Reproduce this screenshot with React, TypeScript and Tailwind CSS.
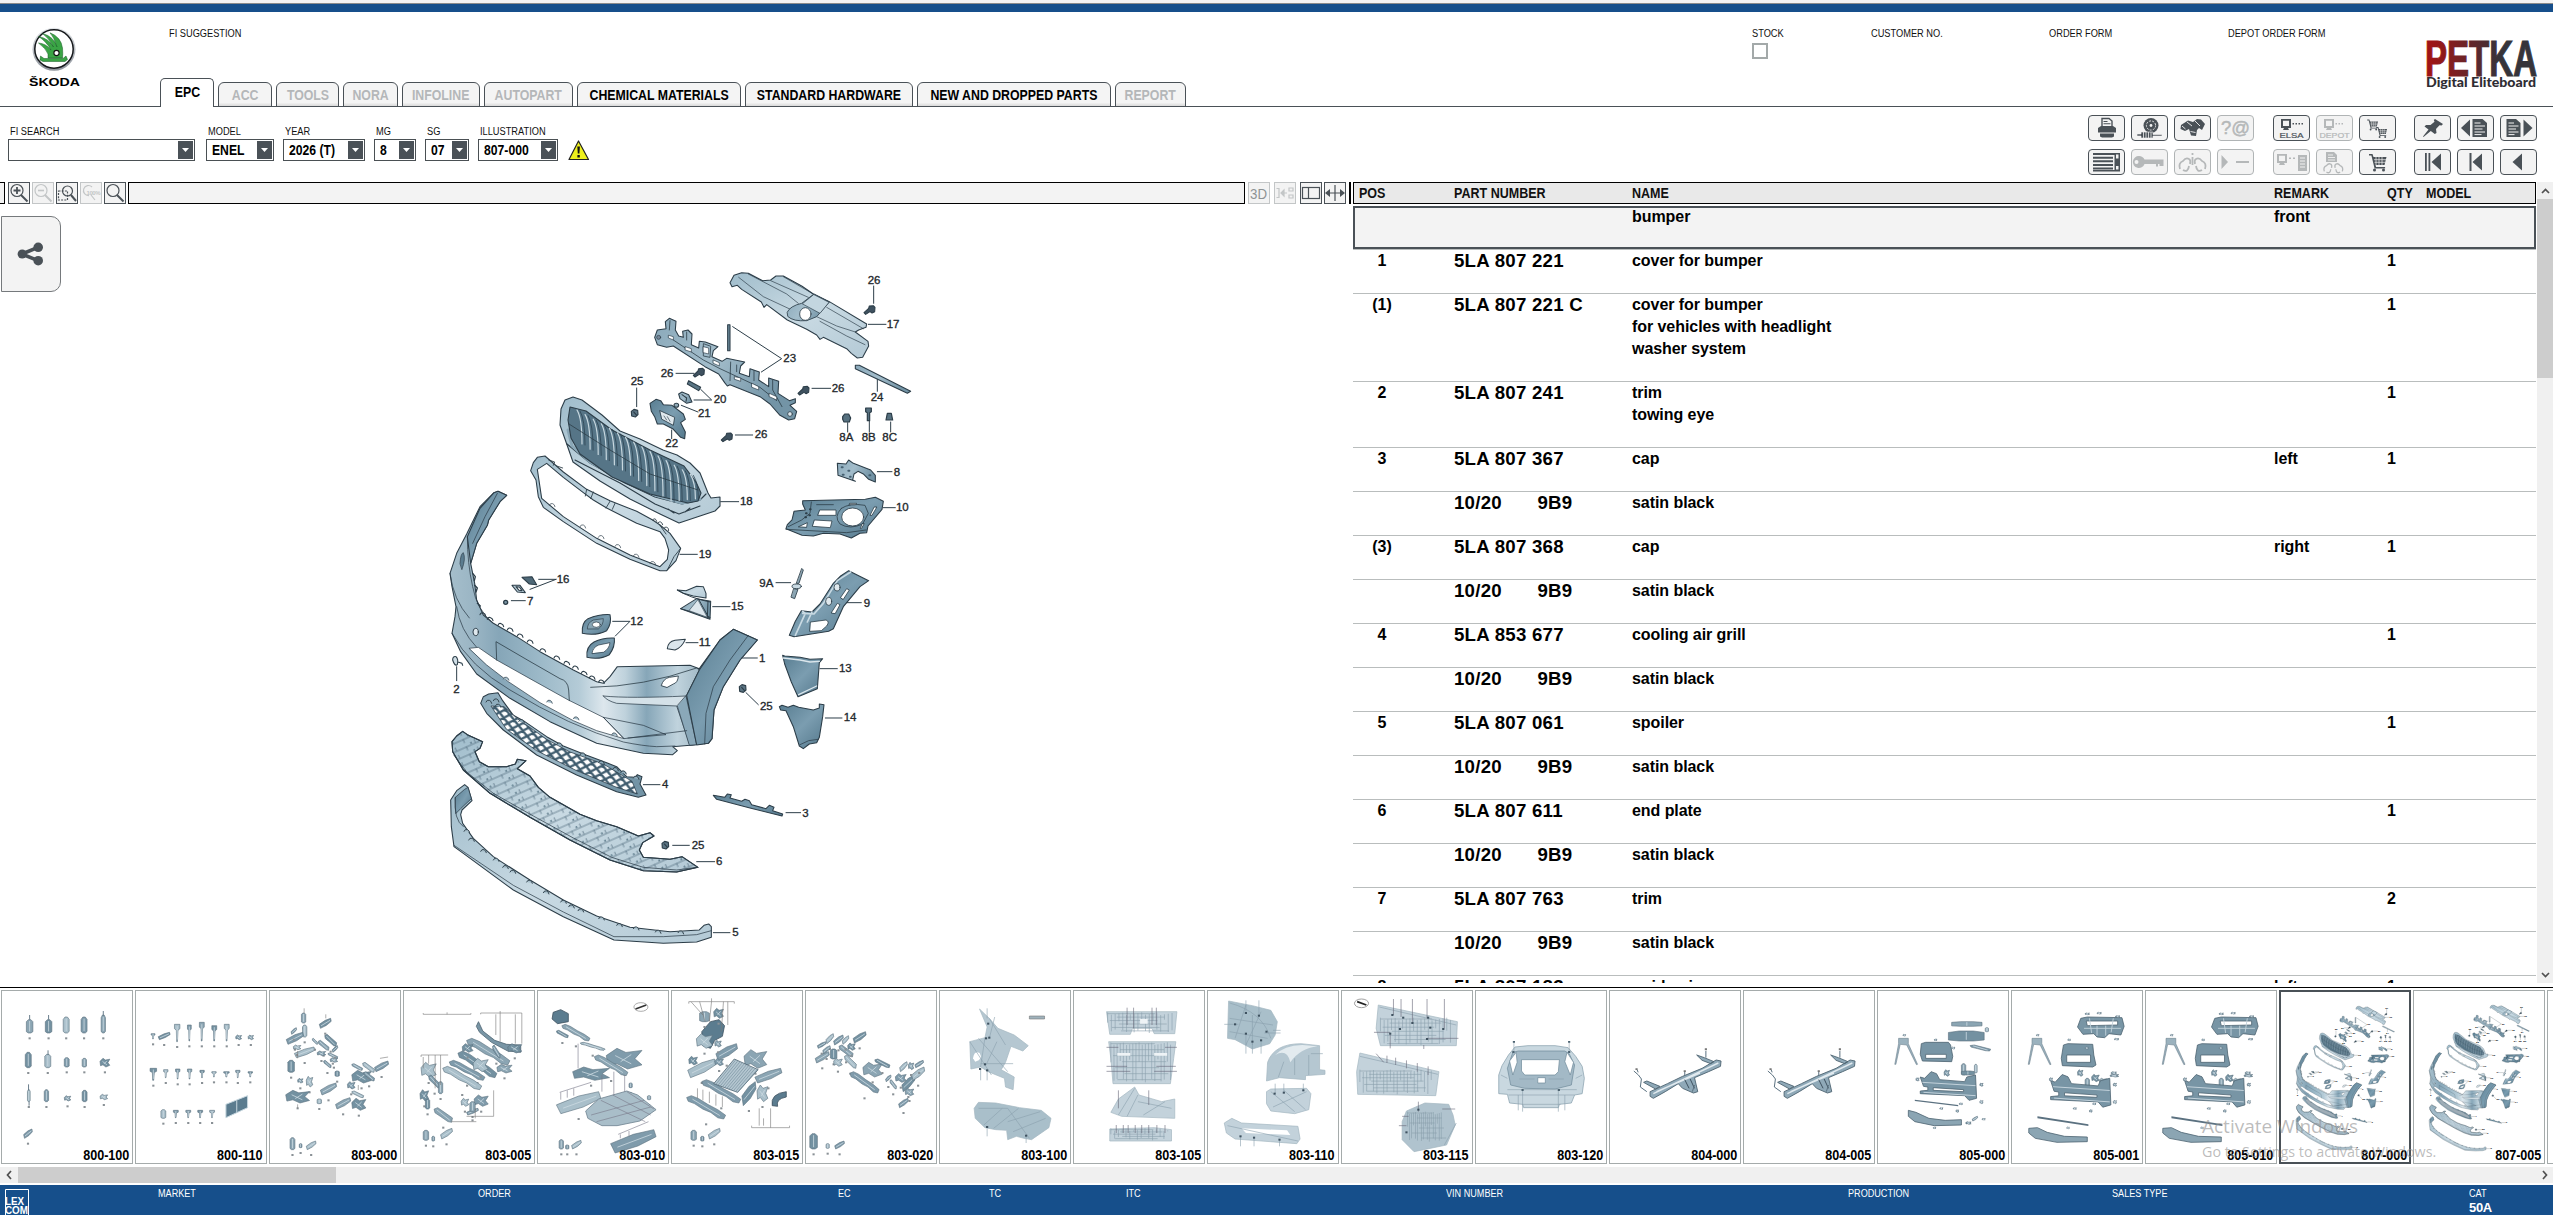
import React from "react";

const INK = "#2c3d48";

/* ---------- main exploded drawing ---------- */

type Lbl = [number, number, string];

const Labels = ({ items }: { items: Lbl[] }) => (
  <g fill="#23282c" stroke="#23282c" strokeWidth="1" fontSize="34.5" fontFamily="'Liberation Sans', Arial, sans-serif">
    {items.map(([x, y, t], i) => (
      <text key={i} x={x} y={y}>{t}</text>
    ))}
  </g>
);

const Screw = ({ x, y }: { x: number; y: number }) => (
  <path transform={`translate(${x} ${y})`} d="M-18 8 L-4 -5 L-2 -12 L10 -13 L15 -8 L14 5 L6 9 L0 5 L-13 13 Z" fill="#3f5260" />
);

const Clip = ({ x, y }: { x: number; y: number }) => (
  <path transform={`translate(${x} ${y})`} d="M-10 -6 L-2 -12 L9 -9 L10 4 L2 11 L-9 8 Z M-3 -4 L5 5" fill="#5b7483" strokeWidth="3.4" />
);

function Drawing({ id }: { id: string }) {
  const u = (n: string) => `url(#${id}${n})`;
  const slats = Array.from({ length: 15 }, (_, i) => {
    const x = 577 + i * 8.1;
    const t = 410 + i * 4.6;
    const b = 444 + i * 5.2 - (i > 11 ? (i - 11) * 6 : 0);
    return `M${x} ${t} Q${x + 5} ${t + 8} ${x + 5} ${b}`;
  }).join(" ");
  const bumps = (pts: number[][]) => pts.map(([x, y]) => `M${x} ${y + 2} q3 -8 10 -5 q6 2 7 9`).join(" ");
  return (
    <g stroke={INK} strokeLinejoin="round" strokeLinecap="round">
      <defs>
        <linearGradient id={id + "l"} x1="0" y1="0" x2="1" y2="1">
          <stop offset="0" stopColor="#9fbccb" />
          <stop offset="0.5" stopColor="#c9dae3" />
          <stop offset="1" stopColor="#b4cad6" />
        </linearGradient>
        <linearGradient id={id + "m"} x1="0" y1="0" x2="1" y2="0.4">
          <stop offset="0" stopColor="#8aa9ba" />
          <stop offset="0.5" stopColor="#a3bdcb" />
          <stop offset="1" stopColor="#7394a6" />
        </linearGradient>
        <linearGradient id={id + "d"} x1="0" y1="0" x2="1" y2="1">
          <stop offset="0" stopColor="#587d91" />
          <stop offset="0.5" stopColor="#7b9db0" />
          <stop offset="1" stopColor="#54788c" />
        </linearGradient>
        <linearGradient id={id + "b"} x1="0" y1="0" x2="1" y2="0">
          <stop offset="0" stopColor="#a5becb" />
          <stop offset="0.08" stopColor="#9ab5c4" />
          <stop offset="0.16" stopColor="#86a6b8" />
          <stop offset="0.3" stopColor="#9dbac9" />
          <stop offset="0.42" stopColor="#b4cbd7" />
          <stop offset="0.5" stopColor="#dde7ed" />
          <stop offset="0.57" stopColor="#bfd2dc" />
          <stop offset="0.64" stopColor="#86a6b8" />
          <stop offset="0.74" stopColor="#c0d3dd" />
          <stop offset="1" stopColor="#54788c" />
        </linearGradient>
        <pattern id={id + "x"} width="32" height="26" patternUnits="userSpaceOnUse" patternTransform="rotate(12)">
          <rect width="32" height="26" fill="#fff" stroke="none" />
          <path d="M0 0 L32 26 M32 0 L0 26" stroke="#3f5c6e" strokeWidth="7" />
        </pattern>
        <pattern id={id + "h"} width="62" height="24" patternUnits="userSpaceOnUse" patternTransform="rotate(-24)">
          <path d="M0 12 H62 M18 12 V22 M48 0 V10" stroke="#4a6678" strokeWidth="2" fill="none" />
          <circle cx="36" cy="6" r="3" fill="#5d7a8a" stroke="none" />
        </pattern>
      </defs>

      {/* radiator grille and frame */}
      <g strokeWidth="1.1">
        <path d="M561 409 L565 400 L573 397 L582 400 L602 415 L620 431 L640 439 L663 450 L677 455 L690 463 L700 473 L708 493 L711 498 L720 497 L720 506 L715 511 L700 516 L679 523 L660 514 L630 499 L600 481 L573 462 L566 442 L560 425 Z" fill={u("l")} />
        <path d="M567 444 L590 463 L625 483 L655 497 L682 504 L700 500 L706 494 M575 460 L620 483 L655 504 L679 514 L700 506 M668 509 l6 4 M685 512 l5 -4" fill="none" />
        <path d="M568 430 L572 446 L590 462 L625 481 L655 495 L682 503 L700 499" fill="none" stroke="#8aa7b7" strokeWidth="3" />
        <path d="M570 407 L586 411 L612 430 L650 450 L684 466 L696 482 L701 493 L698 501 L688 503 L650 494 L612 477 L580 454 L571 438 L568 420Z" fill="#567587" />
        <path d={slats} stroke="#c8d8e0" strokeWidth="1.2" fill="none" />
        <path d={slats} transform="translate(3 1)" stroke="#2c4352" strokeWidth="0.8" fill="none" />
        <path d="M569 424 L610 450 L650 474 L698 490" fill="none" strokeWidth="0.8" />
      </g>

      {/* upper parts */}
      <g transform="translate(620 250) scale(.33333)" strokeWidth="3.2">
        <path d="M330 98 L342 76 L365 68 L385 70 L428 92 L452 90 L468 78 L490 78 L545 108 L580 132 L628 155 L740 222 L738 232 L716 240 L706 246 L744 274 L746 288 L728 322 L712 324 L694 310 L680 296 L610 262 L600 268 L590 255 L560 238 L502 210 L440 164 L432 172 L424 156 L365 118 L352 106 L336 110 Z" fill={u("l")} />
        <path d="M385 72 L500 132 L535 160 M452 92 L565 142 M490 80 L580 132 M620 172 L730 236 M356 82 L430 140 L520 182 M600 214 L680 258 L735 284 M590 200 L650 228 L706 246" fill="none" strokeWidth="2" />
        <path d="M502 186 Q510 168 545 160 L582 132 L628 156 L590 200 L560 212 Q520 215 504 200 Z" fill={u("m")} strokeWidth="2.5" />
        <path d="M582 134 L627 157 L600 190 L548 162Z" fill="#c3d6e0" strokeWidth="2" />
        <ellipse cx="556" cy="192" rx="17" ry="19" fill="#fff" strokeWidth="2.5" />
        <path d="M104 262 L112 240 L138 236 L136 215 L148 205 L168 214 L166 240 L176 258 L190 262 L188 244 L204 240 L216 252 L214 284 L236 294 L238 274 L256 276 L294 290 L280 302 L276 320 L306 334 L320 325 L374 336 L362 348 L358 370 L388 380 L390 356 L418 366 L416 390 L446 410 L446 384 L476 394 L474 430 L508 452 L526 446 L526 458 L510 466 L530 484 L524 506 L506 510 L480 496 L450 462 L420 440 L330 404 L322 408 L314 398 L296 372 L255 350 L160 288 L140 292 L112 284 Z" fill={u("m")} />
        <path d="M160 270 L250 330 L300 356 L420 412 L470 452 M150 212 L148 240 M200 246 L200 270 M250 282 L250 318 L270 322 L272 290Z M332 336 L330 392 M350 345 L350 365 M402 362 L402 392 M458 390 L458 420 L486 470" fill="none" strokeWidth="2.4" />
        <path d="M146 256 l14 4 v10 l-14 -6Z M196 290 l18 6 v10 l-18 -6Z M250 290 l16 4 v18 l-16 -4Z M280 330 l18 8 v10 l-18 -8Z M344 380 l18 4 v10 l-18 -6Z M396 400 l20 10 v10 l-20 -8Z M448 430 l22 10 v10 l-22 -10Z" fill="#fff" strokeWidth="2" />
        <circle cx="116" cy="262" r="6" fill="#789" strokeWidth="2" />
        <circle cx="510" cy="492" r="7" fill="#dfe8ed" strokeWidth="2.4" />
        <path d="M323 224 h7 v78 h-7Z" fill="#6d8a9b" />
        <path d="M206 392 L242 412 L236 422 L202 402Z" fill="#5a7585" />
        <path d="M176 432 L186 426 L206 434 L216 456 L200 460 L180 446Z M186 434 L200 444 L198 454" fill={u("m")} />
        <ellipse cx="169" cy="466" rx="7" ry="6" fill="#8fa9b7" />
        <path d="M90 460 L108 448 L122 452 L130 464 L156 466 L190 492 L196 508 L182 518 L196 546 L194 566 L182 562 L158 536 L130 522 L112 522 L104 500 L94 484 Z" fill={u("d")} />
        <path d="M120 482 L164 502 L160 526 L126 508Z" fill="#dfe8ed" strokeWidth="2.5" />
        <path d="M132 498 l8 12 M142 500 l8 14" strokeWidth="2" />
        <path d="M706 346 L718 346 L872 424 L862 430 L706 356Z" fill={u("m")} />
        <Screw x={750} y={180} /><Screw x={238} y={368} /><Screw x={552} y={422} /><Screw x={322} y={562} />
        <Clip x={44} y={490} />
        <path d="M668 500 L674 492 L686 492 L692 504 L688 516 L672 516 L668 508Z M737 474 h17 v11 l-5 3 v24 h-7 v-24 l-5 -3Z M802 490 h12 l4 20 h-20Z" fill="#56707f" strokeWidth="3.6" />
        <path d="M652 640 L678 642 L686 630 L700 640 L752 660 L766 676 L766 696 L746 688 L730 672 L714 664 L702 672 L698 690 L706 694 L654 676 Z" fill={u("m")} />
        <path d="M665 652 h3 M685 662 h3 M668 674 h3 M690 680 h2 M748 676 h3" strokeWidth="6" stroke="#456071" />
        <path d="M548 752 L736 748 L766 742 L790 754 L786 778 L744 828 L740 848 L720 850 L694 864 L660 852 L610 850 L580 858 L546 856 L498 836 L502 824 L516 810 L522 784 L556 780 L548 762Z" fill={u("d")} />
        <path d="M574 756 L570 790 L545 810 L505 830 M498 838 L680 848 L738 840 M590 764 H640 M664 775 Q640 800 660 822 Q690 840 728 822 L745 790 L735 766 Q690 758 664 775" fill="none" strokeWidth="2.4" />
        <path d="M600 780 h48 v16 h-54Z M584 810 l52 3 l-5 20 l-53 -4Z M536 830 L562 818 L560 831Z M770 772 l-14 24 h-6 l12 -24Z M732 822 l-8 14 h-3 l5 -14Z M690 760 h20 l-4 4 h-18Z" fill="#fff" strokeWidth="2.4" />
        <ellipse cx="698" cy="801" rx="33" ry="27" fill="#fff" strokeWidth="2.5" />
        <path d="M558 790 h2 M570 778 h2 M556 802 h2 M568 796 h2" strokeWidth="6" />
        <path d="M745 223 H798 M761 108 V160 M338 230 L485 326 L424 366 M168 370 H222 M576 415 H632 M346 555 H398 M50 414 V470 M242 418 L275 450 H222 M184 466 L234 486 M155 540 V566 M772 388 V424 M683 518 V546 M748 512 V546 M812 516 V546 M772 665 H816 M790 773 H826 M302 755 H356" fill="none" strokeWidth="3" />
        <Labels items={[[743,101,"26"],[800,233,"17"],[490,337,"23"],[122,382,"26"],[635,427,"26"],[404,565,"26"],[32,406,"25"],[281,460,"20"],[234,500,"21"],[136,591,"22"],[752,453,"24"],[658,573,"8A"],[725,573,"8B"],[787,573,"8C"],[821,677,"8"],[828,784,"10"],[360,765,"18"]]} />
      </g>

      {/* bumper cover and neighbours */}
      <g transform="translate(430 460) scale(.33333)" strokeWidth="3.2">
        <path fillRule="evenodd" d="M302 32 L310 8 L322 -8 L345 -12 L400 36 L470 88 L540 122 L620 154 L668 180 L690 195 L720 220 L752 265 L738 302 L710 332 L690 332 L600 298 L500 250 L400 185 L340 142 L325 110 L318 60Z M322 28 L350 10 L400 52 L460 98 L490 120 L530 144 L620 190 L690 215 L705 235 L716 270 L712 298 L690 320 L600 285 L500 235 L400 170 L335 115Z" fill={u("l")} />
        <path d="M470 88 l-4 20 M490 96 l-8 20 M540 124 l-12 20 M555 130 l-8 18 M690 196 L708 222 M752 265 L732 290 L712 330 M356 0 l18 6 l-4 10 M380 18 l18 6 M668 180 q8 -10 12 4 M684 188 q10 -8 14 6 M704 202 q12 -4 12 10" fill="none" strokeWidth="2.6" />
        <path d={bumps([[358,134],[450,198],[505,230],[555,257],[610,286],[660,308]])} fill="none" strokeWidth="2" />

        <path d="M192 98 L204 94 L230 106 L210 125 L176 180 L172 196 L140 250 L122 310 L134 370 L140 420 L160 465 L190 490 L260 530 L330 575 L430 630 L500 665 L520 670 L540 650 L562 620 L780 616 L808 626 L870 540 L910 508 L982 540 L930 600 L880 680 L852 750 L846 836 L835 850 L780 856 L728 860 L742 872 L728 884 L640 880 L500 850 L360 785 L240 715 L140 642 L92 575 L66 520 L75 470 L78 440 L66 380 L60 340 L80 280 L110 222 L150 140 Z" fill={u("b")} />
        <path d="M192 98 L204 94 L230 106 L210 125 L176 180 L172 196 L140 250 L122 310 L112 230 L150 145 Z" fill={u("d")} />
        <path d="M202 100 L165 170 L128 250 M112 230 Q112 310 128 380 Q140 450 190 490 M60 340 Q70 420 118 474 M80 440 Q90 510 140 562 M66 520 Q120 620 240 690 Q420 800 580 846 Q640 858 680 860 L735 858" fill="none" strokeWidth="2.2" />
        <path d="M90 310 q2 -30 10 -32 q8 18 -4 50Z" fill="#5b7c8f" strokeWidth="2" />
        <ellipse cx="137" cy="516" rx="8" ry="11" fill="#dfe8ed" strokeWidth="3" />
        <path d="M118 565 L145 562 L200 600 L300 656 L415 720 L520 772 L582 836 L500 812 L430 782 L330 728 L235 665 L170 615Z" fill="#fff" strokeWidth="2.2" />
        <path d={bumps([[220,655],[350,724],[430,774],[545,822]])} fill="#a9c0cc" strokeWidth="2" />
        <path d="M200 600 L198 545 Q300 605 390 656 Q414 662 416 690 L418 722" fill="none" strokeWidth="2.4" />
        <path d={bumps([[150,462],[172,476],[204,494],[232,508],[262,526],[292,544],[330,570],[372,592],[402,608],[428,622],[454,638],[478,652],[506,664]])} fill="none" strokeWidth="3.2" />
        <path d="M128 340 l8 10 l-3 12 M134 376 l8 8 l-4 12 M142 430 l9 8" fill="none" strokeWidth="4" />
        <path d="M482 682 Q640 680 800 624 L808 630 L770 706" fill="none" strokeWidth="2.4" />
        <path d="M520 708 Q600 716 768 708 L784 770 L798 854 L780 856 L740 738 L560 730 Q530 722 520 708Z" fill="#d4e1e8" strokeWidth="2.2" />
        <path d="M768 708 L800 854 L778 856 L742 738Z" fill="#8aa8b9" strokeWidth="2.2" />
        <path d="M770 706 L808 630 L870 540 L910 508 L982 540 L930 600 L880 680 L852 750 L846 836 L835 850 L800 855 Z" fill={u("d")} />
        <path d="M955 526 L900 600 L850 680 L828 760 L824 852" fill="none" strokeWidth="2.2" />
        <path d="M520 772 L582 836 L770 812 M520 772 L640 796 L708 824 L594 834" fill="none" strokeWidth="2.2" />
        <path d="M694 676 Q700 656 718 652 L745 648 Q744 668 730 672 L712 682Z" fill="#fff" strokeWidth="2.6" />

        <path d="M68 600 q0 -12 10 -10 q8 8 4 24 q-8 6 -14 -14Z M84 606 l12 4 l2 6" fill="#cfdde5" />
        <path d="M276 352 L306 350 L320 374 L298 372Z" fill="#4f6978" />
        <path d="M246 376 L270 376 L286 398 L262 396Z M258 380 L268 381 L276 392 L267 391Z" fill="#b5c9d4" fillRule="evenodd" />
        <circle cx="227" cy="427" r="6" fill="#7d97a6" strokeWidth="4" />
        <path d="M457 520 Q454 488 474 476 Q510 462 540 464 Q546 490 530 512 Q500 528 457 520Z" fill={u("d")} />
        <path d="M472 506 Q472 488 490 480 L520 476 Q520 496 506 506Z" fill="#86a3b3" strokeWidth="2" />
        <ellipse cx="499" cy="494" rx="12" ry="8" fill="#fff" strokeWidth="2.2" />
        <path d="M471 592 Q467 560 492 546 Q520 532 553 534 Q556 560 538 584 Q510 600 471 592Z" fill={u("d")} />
        <path d="M486 580 Q488 562 506 555 L540 548 Q538 566 522 576Z" fill="#fff" strokeWidth="2.2" />
        <path d="M712 566 Q714 545 735 541 L766 538 Q756 562 735 570Z" fill="#dbe6ec" />
        <path d="M752 446 L800 416 L842 424 L840 478 Z" fill={u("m")} />
        <path d="M742 390 L768 392 L800 379 L820 380 L828 400 L828 414 L790 408 L760 400 Z" fill={u("l")} />
        <path d="M742 390 Q780 414 840 426 M806 418 L838 476 M834 424 L832 474 M752 446 L840 472" fill="none" strokeWidth="3" />
        <path d="M804 420 L832 472 L778 452Z" fill="#dde7ed" strokeWidth="1.6" />
        <Clip x={938} y={686} />
        <path d="M80 620 V662 M326 358 H378 M300 388 L378 358 M244 422 H286 M548 484 H600 L556 528 M768 548 H804 M848 440 H900 M936 594 H982 M948 698 L985 734 M750 283 H802" fill="none" strokeWidth="3" />
        <Labels items={[[70,698,"2"],[380,369,"16"],[291,434,"7"],[601,495,"12"],[806,558,"11"],[903,451,"15"],[987,605,"1"],[990,749,"25"],[806,293,"19"]]} />
      </g>

      {/* lower grill, undertray and spoiler */}
      <g transform="translate(430 680) scale(.33333)" strokeWidth="3.2">
        <path d="M152 70 L160 50 L176 42 L204 38 L218 62 L250 106 L280 122 L350 170 L400 198 L470 226 L530 248 L560 260 L590 290 L616 292 L622 284 L636 290 L630 312 L648 345 L625 352 L560 335 L440 285 L320 225 L220 150 L170 100Z" fill={u("m")} />
        <path d="M184 78 L222 80 L262 116 L350 178 L420 216 L520 252 L566 280 L606 304 L622 342 L560 322 L440 272 L320 212 L230 148 Z" fill={u("x")} strokeWidth="2.2" />
        <path d={bumps([[168,64],[190,60],[196,76],[266,122],[380,192],[450,222],[506,246],[548,266],[572,276],[610,292]])} fill="#8fabba" strokeWidth="2.8" />
        {["l", "h"].map((f) => (
          <path key={f} d="M98 154 L112 164 L158 185 L150 205 L135 215 L148 245 L175 260 L230 260 L256 252 L262 238 L288 242 L262 266 L300 288 L325 322 L360 352 L450 403 L500 422 L560 440 L625 468 L660 458 L672 468 L638 488 L628 510 L640 532 L720 538 L756 530 L804 562 L740 576 L640 572 L540 540 L420 480 L300 412 L180 340 L100 270 L68 215 L66 185 L80 168Z" fill={u(f)} />
        ))}
        <path d="M72 226 L110 276 L190 340 L310 408 L430 474 L545 532 L640 562 L740 570 L800 562" fill="none" strokeWidth="2.2" />
        <path d="M62 360 L80 332 L104 314 L114 322 L126 362 L96 390 L92 404 L98 430 L130 475 L190 530 L300 600 L400 660 L500 708 L600 742 L720 755 L808 750 L822 736 L836 732 L844 740 L844 772 L800 786 L700 790 L552 780 L400 710 L250 630 L100 520 L72 500 L64 440Z" fill={u("l")} />
        <path d="M76 352 L104 328 L114 322 L124 356 L92 386 L78 400 Z" fill={u("d")} strokeWidth="2.2" />
        <path d="M72 496 L250 616 L400 696 L552 770 L700 770 L800 764 L844 752 M76 352 Q70 420 100 440" fill="none" strokeWidth="2.2" />
        <path d={bumps([[102,452],[116,478],[152,512],[190,538],[218,560],[240,574],[290,604],[340,636],[392,664],[416,678],[444,690],[506,714],[560,734],[610,744],[676,754],[744,756]])} fill="#a9c0cc" strokeWidth="2.8" />
        <path d="M850 346 L884 352 L892 342 L904 344 L900 354 L935 364 L945 358 L958 362 L965 374 L1008 386 L1018 376 L1032 382 L1028 392 L1058 402 L1056 408 L960 384 L860 358Z" fill={u("d")} />
        <Clip x={706} y={496} />
        <path d="M640 314 H690 M800 545 H854 M728 496 H778 M850 758 H900" fill="none" strokeWidth="3" />
        <Labels items={[[696,325,"4"],[858,556,"6"],[785,507,"25"],[907,768,"5"]]} />
      </g>

      {/* right-hand brackets */}
      <g transform="translate(720 440) scale(.33333)" strokeWidth="3.2">
        <path d="M246 386 L250 390 L237 430 L230 430Z M222 446 l12 2 l-10 28 l-10 -4Z" fill="#8ba5b3" strokeWidth="2.6" />
        <ellipse cx="230" cy="439" rx="14" ry="7" fill="#c9dae3" strokeWidth="2.6" />
        <path d="M208 586 L226 544 L244 512 L276 516 L300 492 L340 430 L362 408 L386 392 L446 422 L420 440 L370 500 L340 566 L326 574 L222 590Z" fill={u("d")} />
        <path d="M248 514 L256 520 L226 586 M276 516 L262 546 M392 396 L352 422 L310 490 L282 522 L248 520" fill="none" stroke="#c9dae3" strokeWidth="5" />
        <path d="M272 546 L318 540 Q330 544 320 558 L304 572 L270 574Z M334 518 l18 -28 l8 4 l-14 26Z M362 472 l18 -26 l8 4 l-18 28Z" fill="#fff" strokeWidth="2.4" />
        <ellipse cx="351" cy="442" rx="9" ry="11" fill="#dfe8ed" strokeWidth="2.4" />
        <ellipse cx="326" cy="484" rx="9" ry="12" fill="#dfe8ed" strokeWidth="2.4" />
        <path d="M188 646 L194 648 L240 652 L270 658 L308 656 L298 668 L292 746 L234 770 L214 726 L194 672Z" fill={u("d")} />
        <path d="M190 654 L240 660 L270 666 L298 664 M236 764 L290 738" fill="none" stroke="#dbe6ec" strokeWidth="4" />
        <path d="M178 800 L186 796 L204 802 L220 796 L236 802 L280 810 L298 804 L298 792 L312 794 L308 830 L298 892 L290 908 L268 912 L250 926 L238 918 L220 860 L198 812 L182 810Z" fill={u("d")} />
        <path d="M240 914 L266 902 L294 898" fill="none" strokeWidth="2.2" />
        <path d="M168 428 H212 M380 488 H424 M300 686 H352 M316 834 H366 M198 1118 H242" fill="none" strokeWidth="3" />
        <Labels items={[[118,440,"9A"],[431,500,"9"],[357,697,"13"],[371,843,"14"],[247,1130,"3"]]} />
      </g>
    </g>
  );
}

/* ---------- thumbnail drawings ---------- */

type Bit = [number, number, number, number, number];

function shape([x, y, w, h, v]: Bit) {
  const p = (a: number, b: number) => `${(x + w * a).toFixed(1)} ${(y + h * b).toFixed(1)}`;
  switch (v) {
    case 0:
      return w > 40
        ? `M${p(0, 0.08)} L${p(0.12, 0)} L${p(0.3, 0.12)} L${p(0.55, 0.38)} L${p(0.8, 0.6)} L${p(1, 0.84)} L${p(0.95, 1)} L${p(0.8, 0.95)} L${p(0.62, 0.72)} L${p(0.42, 0.58)} L${p(0.2, 0.34)} L${p(0.04, 0.24)}Z`
        : `M${p(0, 0.1)} L${p(0.2, 0)} L${p(0.6, 0.35)} L${p(1, 0.7)} L${p(0.95, 1)} L${p(0.75, 0.95)} L${p(0.35, 0.6)} L${p(0.05, 0.35)}Z`;
    case 1:
      return `M${p(0, 0.6)} L${p(0.5, 0.2)} L${p(0.95, 0)} L${p(1, 0.3)} L${p(0.6, 0.7)} L${p(0.1, 1)}Z`;
    case 2:
      return `M${p(0, 0.15)} L${p(0.3, 0)} L${p(0.7, 0)} L${p(1, 0.15)} L${p(1, 0.9)} L${p(0.7, 1)} L${p(0.3, 1)} L${p(0, 0.9)}Z`;
    case 4:
      return `M${p(0, 0)} L${p(1, 0)} L${p(1, 0.25)} L${p(0.65, 0.35)} L${p(0.55, 1)} L${p(0.4, 1)} L${p(0.35, 0.35)} L${p(0, 0.25)}Z`;
    default:
      return `M${p(0, 0.35)} L${p(0.3, 0)} L${p(0.55, 0.2)} L${p(1, 0.1)} L${p(0.8, 0.5)} L${p(1, 0.8)} L${p(0.6, 1)} L${p(0.3, 0.75)} L${p(0.05, 0.85)}Z`;
  }
}

function sheen([x, y, w, h, v]: Bit) {
  const p = (a: number, b: number) => `${(x + w * a).toFixed(1)} ${(y + h * b).toFixed(1)}`;
  if (v === 0) return `M${p(0.15, 0.15)} L${p(0.85, 0.85)}`;
  if (v === 1) return `M${p(0.15, 0.75)} L${p(0.9, 0.2)}`;
  if (v === 3) return `M${p(0.25, 0.35)} L${p(0.7, 0.75)} M${p(0.7, 0.3)} L${p(0.4, 0.65)}`;
  return `M${p(0.5, 0.1)} V${(y + h * 0.88).toFixed(1)}`;
}

const FILLS = ["#8ba5b3", "#7391a1", "#a9bfca", "#7f9bab"];

const Bits = ({ d, marks = true }: { d: Bit[]; marks?: boolean }) => (
  <>
    {d.map((b, i) => (
      <React.Fragment key={i}>
        <path d={shape(b)} fill={FILLS[i % 4]} stroke="#5a707e" strokeWidth="0.6" />
        <path d={sheen(b)} fill="none" stroke="#cddae2" strokeWidth="0.8" />
        {marks && <path d={`M${b[0] + b[2] / 2 - 2} ${b[1] + b[3] + 13} h4 v6 h-4Z`} fill="#8a9196" />}
      </React.Fragment>
    ))}
  </>
);

const Panel = ({ d, fill = "#c3d2db" }: { d: string; fill?: string }) => (
  <path d={d} fill={fill} stroke="#a5b8c2" strokeWidth="0.7" />
);

const Lines = ({ d, c = "#8aa0ad", w = 0.6 }: { d: string; c?: string; w?: number }) => (
  <path d={d} fill="none" stroke={c} strokeWidth={w} />
);

const caps: Bit[] = [[48,134,12,40,2],[83,134,12,40,2],[116,126,11,48,2],[149,126,11,48,2],[186,120,8,54,2],[46,232,11,46,2],[82,238,11,40,2],[118,248,9,28,2],[151,250,8,26,2],[184,250,18,26,3],[50,344,5,36,2],[81,344,8,36,2],[118,362,12,16,3],[151,346,9,34,2],[184,358,14,16,3],[43,462,16,28,1]];
const screws: Bit[] = [[278,176,7,16,4],[291,172,22,22,1],[321,148,10,52,4],[345,150,7,48,4],[367,142,9,56,4],[390,152,9,46,4],[413,148,9,50,4],[434,180,11,14,3],[457,180,10,14,3],[276,280,12,36,4],[301,284,8,24,4],[323,282,8,30,4],[345,282,8,30,4],[368,286,8,22,4],[390,290,8,16,4],[412,290,10,16,4],[434,286,8,22,4],[457,290,8,16,4],[296,404,9,26,2],[319,406,9,22,4],[342,406,9,22,4],[364,406,9,22,4],[386,406,9,22,4]];
const t2: Bit[] = [[555,114,8,30,2],[588,130,22,30,1],[557,150,8,36,2],[527,172,32,36,1],[586,196,20,30,0],[598,178,22,36,0],[542,216,38,32,1],[584,228,16,14,3],[604,234,18,16,0],[530,256,12,36,2],[540,210,14,14,3],[596,256,14,22,0],[608,248,14,14,3],[617,288,8,16,2],[564,304,12,32,3],[548,310,10,14,3],[648,266,20,20,0],[648,286,36,38,3],[668,262,22,30,0],[690,258,26,32,1],[590,324,30,36,1],[526,346,44,38,3],[648,348,22,20,0],[640,320,14,22,3],[618,368,28,34,1],[648,370,26,36,3],[584,372,8,14,2],[670,290,20,28,0],[534,488,9,36,2],[551,506,5,12,2],[564,498,18,26,1],[536,158,10,20,1],[575,190,10,18,0],[612,212,10,20,1]];
const t3: Bit[] = [[860,190,80,80,0],[844,228,72,80,0],[816,274,72,70,0],[828,256,66,60,0],[916,268,28,26,3],[936,206,26,28,3],[776,262,28,46,3],[790,300,22,40,0],[808,320,8,36,2],[774,344,16,34,3],[850,370,14,24,3],[874,360,26,34,3],[780,466,10,30,2],[796,484,5,14,2],[812,460,22,32,1],[860,400,22,20,1],[800,398,34,44,0],[852,206,20,26,3],[872,250,28,40,3],[908,210,14,40,0],[866,380,10,30,2],[784,372,8,30,2]];
const t4: Bit[] = [[1036,148,52,50,0],[1026,166,22,22,0],[1070,202,46,24,0],[1118,220,66,62,3],[1096,240,62,62,0],[1056,276,68,40,3],[1026,350,82,66,1],[1126,464,84,70,1],[1031,494,8,28,2],[1043,510,6,12,2],[1054,496,18,26,1],[1160,324,6,14,2],[1194,362,6,12,2]];
const t5: Bit[] = [[1290,110,18,30,2],[1316,100,18,30,3],[1284,176,30,44,3],[1320,206,40,50,1],[1372,224,42,56,3],[1270,244,16,26,3],[1268,252,52,56,1],[1294,314,72,70,0],[1392,280,50,44,1],[1368,320,26,72,1],[1396,330,20,50,3],[1266,362,72,70,0],[1274,466,10,30,2],[1292,484,6,14,2],[1306,460,22,32,1],[1318,250,16,22,3],[1318,196,12,20,3]];
const t6: Bit[] = [[-64,230,26,34,1],[-60,200,16,20,1],[-44,176,14,30,1],[-30,180,18,30,1],[-20,210,26,36,0],[6,170,24,34,1],[-10,240,22,40,0],[0,290,54,64,0],[24,262,36,44,3],[46,252,28,26,0],[92,260,14,30,1],[84,296,20,26,3],[74,314,12,28,0],[96,300,24,50,1],[114,276,24,40,1],[90,370,18,28,1],[102,340,16,22,3],[-74,476,14,46,2],[-44,506,6,14,2],[-28,498,18,24,1],[-50,212,14,24,1],[-36,222,12,30,2],[-14,182,12,26,1],[66,300,10,20,1],[108,262,10,22,3],[-4,204,14,22,3],[-30,250,16,24,3],[120,256,16,22,1]];

const BeamPart = ({ dx }: { dx: number }) => (
  <g transform={`translate(${dx} 0)`}>
    <path d="M154 350 L186 326 L214 304 L250 280 L276 255 L285 258 L284 274 L262 290 L236 308 L242 350 L234 354 L214 340 L206 326 L182 350 L160 370 L154 364Z M142 322 L148 318 L172 334 L164 342Z M240 240 L254 248 L272 260 L266 266 L250 256Z" fill="#8fa9b8" stroke="#4d6371" strokeWidth="0.9" />
    <path d="M160 356 L280 264 M166 350 L246 294" stroke="#e1eaef" strokeWidth="1.4" />
    <path d="M218 314 L226 340 M228 312 L236 340" stroke="#3f5260" strokeWidth="1" />
    <Lines d="M124 288 Q134 300 138 312 L136 336 L148 350 M132 292 L130 284 M257 228 V248 M218 290 V300 M236 330 L232 350" c="#5b7180" w={1} />
    <path d="M255 220 h4 v6 h-4Z M216 286 h4 v5 h-4Z M127 280 h4 v5 h-4Z" fill="#777" />
  </g>
);

const CrossMember = ({ dx, kind }: { dx: number; kind: number }) => (
  <g transform={`translate(${dx} 0)`}>
    {kind === 0 ? (
      <Bits d={[[462,140,56,14,2],[456,168,66,30,2],[524,158,6,12,2],[496,210,38,18,0],[480,266,8,34,2],[480,288,24,12,2],[504,268,5,26,2]]} marks={false} />
    ) : (
      <>
        <path fillRule="evenodd" d="M454 130 L466 126 L530 128 L534 154 L528 180 L506 176 L498 188 L484 186 L478 176 L458 178 L448 156Z M464 138 L522 138 L522 150 L466 152Z" fill="#7895a5" stroke="#4d6371" strokeWidth="0.8" />
        <Lines d="M460 160 H528 M470 130 L474 174 M514 130 L510 172 M484 152 V182 M500 152 V182" c="#c3d2db" w={0.9} />
        <Bits d={[[462,310,8,30,2],[474,298,14,22,3],[488,310,14,14,3],[508,298,16,8,3],[510,290,10,8,3],[462,114,8,5,3],[484,112,8,5,3],[518,122,8,5,3],[516,190,8,5,3]]} marks={false} />
      </>
    )}
    <path d="M364 190 H382 V206 L399 268 L397 269 L379 210 L367 208 L359 268 L357 268 L364 206Z" fill="#9bb2be" stroke="#6d828f" strokeWidth="0.6" />
    <path fillRule="evenodd" d={kind === 0 ? "M406 206 L414 202 L456 202 L460 210 L464 244 L462 260 L408 258 L404 238Z M414 238 H452 V250 H414Z" : "M422 210 L430 206 L476 208 L478 240 L482 270 L476 276 L420 272 L418 250Z M428 240 H472 V262 H428Z"} fill="#7895a5" stroke="#4d6371" strokeWidth="0.8" />
    <g transform={kind === 0 ? "" : "translate(-34 -32) scale(1.07 1.14)"}>
      <path fillRule="evenodd" d="M404 306 L412 310 L424 290 L434 296 L440 314 L486 320 L490 306 L506 300 L508 370 L494 376 L486 362 L404 356 L404 348 L418 346 L418 336 L410 334Z M428 338 L484 344 V350 L428 346Z" fill="#7895a5" stroke="#4d6371" strokeWidth="0.8" />
      <path d="M408 322 L506 332 M410 352 L506 362" stroke="#c3d2db" strokeWidth="1" />
    </g>
    <path d={kind === 0 ? "M394 374 L474 390 V394 L394 378Z" : "M374 424 L468 448 V453 L374 430Z"} fill="#5b7180" />
    <path d={kind === 0 ? "M382 406 L396 412 L420 430 L450 436 L480 434 L480 450 L430 452 L394 440 L382 424Z" : "M358 460 L374 458 L392 472 L424 484 L466 486 L466 500 L410 502 L370 490 L358 474Z"} fill="#8ba5b3" stroke="#4d6371" strokeWidth="0.8" />
    <Bits d={[[372,178,5,5,3],[430,192,5,5,3],[462,216,6,6,3],[448,284,10,20,3],[396,308,6,10,3],[514,324,6,10,3],[514,376,6,10,3],[476,384,6,5,3],[440,398,6,5,3],[470,404,5,8,3],[428,456,5,5,3]]} marks={false} />
    {kind === 0 && <Bits d={[[500,424,10,14,1],[488,440,10,8,3],[518,430,6,5,3]]} marks={false} />}
  </g>
);

const RearBox = () => (
  <>
    <path d="M1202 272 L1214 240 L1226 216 L1250 212 L1300 212 L1324 218 L1338 244 L1350 274 L1354 310 L1350 356 L1336 360 L1330 384 L1308 388 L1306 398 L1242 398 L1240 388 L1216 384 L1212 358 L1196 356 L1196 300Z" fill="#c9d8e0" stroke="#8fa6b3" strokeWidth="0.8" />
    <path d="M1222 232 L1232 228 L1318 228 L1326 236 L1336 270 L1330 330 L1300 342 L1244 340 L1218 330 L1212 280Z" fill="#a3b9c6" stroke="#6f8a99" strokeWidth="0.7" />
    <path d="M1238 254 H1308 L1306 290 L1300 300 H1244 L1238 288Z M1268 308 h14 v16 h-14Z M1216 258 L1228 232 L1230 262 L1222 300Z M1322 232 L1334 262 L1328 300 L1318 260Z" fill="#fff" stroke="#6f8a99" strokeWidth="0.7" />
    <Lines d="M1212 344 H1340 M1214 360 H1336 M1240 388 H1310 M1224 200 V228 M1326 200 V228 M1240 344 V410 M1232 360 V406 M1306 344 V410 M1318 360 V406 M1234 312 H1262 M1288 312 H1316 M1200 300 L1212 310 M1350 300 L1338 310" />
    <path d="M1221 228 h4 v6 h-4Z M1324 228 h4 v6 h-4Z M1238 342 h4 v6 h-4Z M1305 342 h4 v6 h-4Z M1222 198 h4 v5 h-4Z M1324 198 h4 v5 h-4Z" fill="#4d6371" />
  </>
);

const hatch = (x: number, y: number, w: number, h: number, n: number) =>
  Array.from({ length: n }, (_, i) => `M${x + (w * i) / n} ${y + ((i * 7) % 9)} V${y + h * (i % 3 === 0 ? 0.5 : 1) - ((i * 5) % 11)}`).join(" ") +
  Array.from({ length: Math.round(n / 3) }, (_, i) => `M${x + ((i * 17) % 30)} ${y + (h * 3 * i) / n + 4} h${w * 0.7}`).join(" ");

const Dots = ({ d }: { d: number[][] }) => (
  <>
    {d.map(([x, y], i) => (
      <path key={i} d={`M${x - 2} ${y - 3} h4 v6 h-4Z`} fill="#3f5260" />
    ))}
  </>
);

type Card = { id: string; x: number; art?: React.ReactNode; full?: boolean };

const CARDS: Card[] = [
  { id: "800-100", x: 2, art: (
    <>
      <Bits d={caps} />
      <Lines d="M54 120 V134 M89 120 V134 M190 108 V122 M88 226 V240 M52 328 V346 M53 380 V392" c="#5b7180" w={0.9} />
    </>
  ) },
  { id: "800-110", x: 249, art: (
    <>
      <Bits d={screws} />
      <path d="M416 388 L456 362 V398 L416 428Z M436 376 V412" fill="#5b7c8f" stroke="#c8d8e0" />
    </>
  ) },
  { id: "803-000", x: 496, art: (
    <>
      <Bits d={t2} />
      <Lines d="M560 100 V114 M600 118 V130 M548 228 V250 M700 250 L715 246 M660 330 V345 M548 388 V400" c="#777" />
    </>
  ) },
  { id: "803-005", x: 743.5, art: (
    <>
      <path d="M882 140 L890 168 L912 196 L934 208 L960 210 L960 232 L936 228 L906 202 L884 172 L878 154Z" fill="#7895a5" stroke="#4d6371" strokeWidth="0.8" />
      <Bits d={t3} />
      <Lines d="M780 114 V118 H868 V114 M824 112 V118 M886 118 V114 H962 V206 M922 108 V200 M914 118 V180 M950 118 V206 M776 246 V240 H826 M780 246 V280 M790 240 V266 M802 240 V340 M812 240 V330 M910 346 V424 M860 424 H910 M832 440 H878 M876 400 V430" c="#777" />
    </>
  ) },
  { id: "803-010", x: 991, art: (
    <>
      <path d="M1020 112 L1034 104 L1048 116 L1048 140 L1028 146 L1018 132Z" fill="#5b7c8f" stroke="#3f5260" strokeWidth="0.8" />
      <Bits d={t4} />
      <path d="M1080 408 L1104 372 L1156 348 L1176 360 L1210 404 L1180 438 L1138 452 L1110 452 L1084 430Z" fill="#a9bec9" stroke="#6d828f" strokeWidth="0.8" />
      <Lines d="M1108 376 L1190 440 M1156 350 L1206 402 M1090 420 L1188 376 M1100 440 L1200 396 M1130 360 L1200 420 M1066 206 V280 M1110 300 V350 M1132 290 V360 M1152 300 V350 M1032 352 L1090 322 M1034 352 V374 M1046 346 V368 M1058 340 V362 M1140 478 L1196 440 M1144 478 V490 M1160 468 V484" c="#778" />
      <ellipse cx="1182" cy="96" rx="13" ry="13" fill="none" stroke="#999" strokeWidth="0.8" />
      <path d="M1172 102 L1192 90" stroke="#333" strokeWidth="1.6" />
    </>
  ) },
  { id: "803-015", x: 1238, art: (
    <>
      <path d="M1294 170 L1310 140 L1326 134 L1336 152 L1332 184 L1318 196 L1310 220 L1296 212Z" fill="#5b7c8f" stroke="#3f5260" strokeWidth="0.8" />
      <Bits d={t5} />
      <path d="M1316 326 L1354 252 L1398 284 L1360 352Z" fill="#b4c6d0" stroke="#4d6371" strokeWidth="0.8" />
      <Lines d={Array.from({ length: 11 }, (_, i) => `M${1320 + i * 4} ${328 + i * 2.5} L${1356 + i * 4} ${256 + i * 2.8}`).join(" ")} c="#6f8a99" />
      <path d="M1424 392 Q1420 356 1450 350 V366 Q1430 372 1434 394Z" fill="#5b7c8f" stroke="#3f5260" strokeWidth="0.8" />
      <Lines d="M1270 86 V80 H1354 V86 M1312 70 V80 M1274 80 L1296 120 M1290 80 L1300 140 M1312 80 L1308 140 M1334 80 L1330 170 M1342 80 V150 M1386 452 V458 H1456 V452 M1421 400 V458 M1400 400 V452 M1408 430 V452 M1286 340 V370 M1296 344 V376 M1308 350 V384 M1320 358 V392 M1332 364 V396" c="#777" />
    </>
  ) },
  { id: "803-020", x: -82, art: <Bits d={t6} /> },
  { id: "803-100", x: 164, art: (
    <>
      <Panel d="M238 102 L256 130 L272 160 L302 180 L328 212 L318 228 L296 214 L286 262 L278 284 L302 306 L300 344 L286 336 L284 310 L254 290 L240 276 L222 282 L220 200 L248 188 L252 156Z" fill="#b5c7d1" />
      <path d="M226 250 q2 -24 12 -16 q8 20 -8 26Z" fill="#fff" />
      <Panel d="M228 400 L236 382 L268 384 L312 398 L352 406 L370 430 L366 458 L334 494 L320 490 L306 484 L290 494 L288 466 L268 464 L248 458 L230 430Z" fill="#a9bfca" />
      <Lines d="M220 200 L260 300 M236 190 L290 290 M248 188 L240 276 M256 130 L286 210 M270 200 L250 270 M236 400 L290 400 L330 490 M246 450 L280 400 M264 460 L310 400 M290 440 L350 410 M300 470 L360 430 M252 100 V130 M266 126 L256 190 M240 266 H300 M240 280 V316 M252 286 V316 M252 460 V484 M324 480 V504" />
      <path d="M330 123 h28 v9 h-28Z" fill="#9fb2bc" stroke="#777" strokeWidth="0.6" />
      <Dots d={[[256,188],[250,190],[248,268],[239,282],[252,286],[252,456],[324,482],[254,146]]} />
    </>
  ) },
  { id: "803-105", x: 411, art: (
    <>
      <Panel d="M472 110 H602 L598 176 H560 L556 160 L520 160 L516 178 H478Z" />
      <Panel d="M476 200 H600 L596 250 L590 326 H484 L480 250Z" />
      <Panel d="M480 412 L494 372 L524 336 L532 360 L574 380 L598 372 V430 L500 424Z" />
      <Panel d="M478 462 L560 458 L592 464 V498 H478Z" />
      <Lines d={hatch(474, 112, 126, 62, 18) + hatch(480, 202, 116, 120, 20) + hatch(480, 460, 112, 36, 16) + "M494 420 L524 340 M510 424 L530 360 M530 380 L592 400 M540 420 L580 380"} />
      <path d="M534 132 h14 v14 h-14Z M492 234 h24 v8 h-24Z M560 234 h24 v8 h-24Z" fill="#eef3f6" />
      <Lines d="M510 98 V150 M522 98 V160 M556 98 V150 M564 98 V150 M472 217 H494 M580 217 H602 M472 274 H510 M564 274 H600 M472 289 H516 M560 289 H602 M494 346 V400 M550 346 V390 M490 450 V474 M503 450 V474 M512 450 V474 M525 450 V474 M537 450 V474 M550 450 V474 M565 450 V474 M580 450 V474" c="#667" />
    </>
  ) },
  { id: "803-110", x: 659, art: (
    <>
      <Panel d="M698 78 L742 92 L776 106 L788 140 L784 180 L774 206 L742 222 L710 194 L696 190Z" fill="#a9bfca" />
      <Panel d="M768 318 L770 262 Q782 206 832 206 L866 212 L866 284 L876 286 V298 L840 302 V314 L792 308Z" fill="#b5c7d1" />
      <path d="M784 240 Q800 212 834 210 L862 214 Q830 220 812 262 Q806 220 784 240Z" fill="#e3ebef" />
      <Panel d="M768 350 L776 342 L842 340 L850 356 L846 404 L820 416 L776 408 L768 386Z" />
      <Panel d="M690 444 L704 430 L722 444 L826 454 L830 492 L824 506 L710 492 L694 474Z" />
      <path d="M722 460 L806 466 L812 480 L730 474Z" fill="#fff" />
      <Lines d="M700 84 Q760 110 776 190 M700 130 L780 150 M730 90 L710 190 M742 120 V210 M700 170 L770 190 M758 110 L730 210 M800 260 L790 306 M820 250 V300 M846 240 V300 M776 350 L820 410 M800 346 L840 404 M780 396 L842 350 M696 452 L826 498 M730 76 V110 M754 76 V120 M690 148 H716 M730 176 V236 M742 200 V236 M758 196 V236 M764 174 H794 M780 166 H794 M784 326 V354 M800 326 V352 M836 326 V346 M720 484 V514 M745 488 V514 M792 494 V514 M850 236 H872" />
      <Dots d={[[730,114],[754,122],[710,148],[730,176],[742,200],[758,196],[768,170],[783,356],[800,353],[836,346],[720,484],[745,488],[792,494]]} />
    </>
  ) },
  { id: "803-115", x: 906, art: (
    <>
      <Panel d="M974 90 L1120 140 L1118 212 H978 L970 160Z" />
      <Panel d="M940 234 L1086 290 L1080 362 L936 358 L934 290Z" />
      <Panel d="M1018 440 L1026 408 L1060 384 L1104 388 L1112 420 L1116 450 L1100 510 L1040 530 L1018 494Z" fill="#b0c3ce" />
      <Lines d={hatch(978, 128, 136, 82, 20) + hatch(940, 284, 138, 74, 22) + hatch(1028, 410, 66, 90, 18) + "M976 96 L1118 150 M940 244 L1084 298 M1096 510 L1118 444"} />
      <Lines d="M1002 72 V120 M1016 72 V126 M1037 72 V146 M1064 72 V130 M1096 72 V160 M966 172 H996 M996 176 V220 M1064 190 H1122 M1058 210 V222 M970 236 L984 262 M990 242 V264 M1006 248 V270 M1026 256 V280 M1046 264 V290 M1066 274 V300 M1048 380 V410 M1018 424 H1030 M1012 452 H1026 M1092 402 H1116" c="#667" />
      <ellipse cx="943" cy="85" rx="13" ry="13" fill="none" stroke="#888" strokeWidth="0.8" />
      <path d="M935 80 L952 90" stroke="#222" strokeWidth="1.8" />
      <Dots d={[[1000,120],[1020,128],[1037,144],[1066,128],[1070,158],[1014,162],[1094,162],[996,176],[1064,192],[1048,404],[1026,472]]} />
    </>
  ) },
  { id: "803-120", x: 1153, art: <RearBox /> },
  { id: "804-000", x: -167, art: <BeamPart dx={-246} /> },
  { id: "804-005", x: 79, art: <BeamPart dx={0} /> },
  { id: "805-000", x: 325, art: <CrossMember dx={0} kind={0} /> },
  { id: "805-001", x: 572, art: <CrossMember dx={246} kind={1} /> },
  { id: "805-010", x: 818, art: <CrossMember dx={492} kind={1} /> },
  { id: "807-000", x: 0, full: true },
  { id: "807-005", x: 0, full: true },
];

function Thumb({ c, selected }: { c: Card; selected: boolean }) {
  return (
    <div className={`grid h-[174px] w-[132px] shrink-0 overflow-hidden bg-white ${selected ? "border-2 border-[#4a5157]" : "border border-[#a5abab]"}`}>
      {c.full ? (
        <svg className="col-start-1 row-start-1 h-full w-full" viewBox="380 208 598 790" preserveAspectRatio="xMidYMid meet">
          <Drawing id={"t" + c.id} />
        </svg>
      ) : (
        <svg className="col-start-1 row-start-1 h-full w-full [&_*]:[vector-effect:non-scaling-stroke]" viewBox={`${c.x + 1} 48 240 516`} preserveAspectRatio="none">
          {c.art}
        </svg>
      )}
      <span className={`z-10 col-start-1 row-start-1 origin-right scale-x-[.9] self-end justify-self-end text-[14px] leading-[14px] font-bold ${selected ? "mr-[2px]" : "mr-[3px] mb-px"}`}>{c.id}</span>
    </div>
  );
}

/* ---------- small building blocks ---------- */

const Caption = ({ children, className = "" }: { children: React.ReactNode; className?: string }) => (
  <div className={`text-[10px] leading-[12px] whitespace-nowrap text-[#111] ${className}`}>
    <span className="inline-block origin-left scale-x-[.925]">{children}</span>
  </div>
);

function Field({ label, value, box }: { label: string; value: string; box: string }) {
  return (
    <div className="shrink-0">
      <Caption className="mb-px w-0 pl-[2px]">{label}</Caption>
      <div className={`flex h-[22px] items-center justify-between border border-[#4a5054] bg-white pr-px pl-[5px] ${box}`}>
        <span className="w-0 origin-left scale-x-[.87] text-[14px] font-bold whitespace-nowrap">{value}</span>
        <span className="flex h-[18px] w-[15px] shrink-0 items-center justify-center bg-[#4a5157]">
          <svg width="7" height="4" viewBox="0 0 7 4"><path d="M0 0H7L3.5 4Z" fill="#fff" /></svg>
        </span>
      </div>
    </div>
  );
}

const TABS: { t: string; w: string; off?: boolean }[] = [
  { t: "ACC", w: "w-[54px]", off: true },
  { t: "TOOLS", w: "w-[63px]", off: true },
  { t: "NORA", w: "w-[55px]", off: true },
  { t: "INFOLINE", w: "w-[78px]", off: true },
  { t: "AUTOPART", w: "w-[89px]", off: true },
  { t: "CHEMICAL MATERIALS", w: "w-[164px]" },
  { t: "STANDARD HARDWARE", w: "w-[168px]" },
  { t: "NEW AND DROPPED PARTS", w: "w-[194px]" },
  { t: "REPORT", w: "w-[71px]", off: true },
];

function ToolButton({ off, children }: { off?: boolean; children: React.ReactNode }) {
  return (
    <button className={`flex h-[26px] w-[37px] items-center justify-center rounded-[4px] border bg-[#f3f3f3] ${off ? "border-[#b0b4b5] text-[#b5b8b9]" : "border-[#4a5157] text-[#4a5157]"}`}>
      <svg width="35" height="24" viewBox="1 1 35 24" fill="currentColor" stroke="none">{children}</svg>
    </button>
  );
}

const Cart = () => (
  <g>
    <path d="M10 5 h3.5 l1 3 h13 l-2 8 h-9 l.6 2 h9 v1.5 h-10.5 l-3.2 -13 h-2.4Z" />
    <path d="M17 8v8M20 8v8M23 8v8M15 10.7h12M15.5 13.3h11" stroke="#f3f3f3" strokeWidth="0.7" />
    <circle cx="15.5" cy="21" r="1.5" /><circle cx="24.5" cy="21" r="1.5" />
  </g>
);
const Monitor = () => <path fillRule="evenodd" d="M8 4h10v9h-3l1 2h-6l1 -2h-3Z M10 5.8v5.2h6v-5.2Z" />;
const TinyText = ({ t }: { t: string }) => (
  <text x="18.5" y="22.6" textAnchor="middle" fontSize="6.8" textLength={t.length > 4 ? 30 : 24} lengthAdjust="spacingAndGlyphs" stroke="currentColor" strokeWidth="0.2" fontFamily="'Liberation Sans', sans-serif">{t}</text>
);
const Car = () => (
  <path d="M6 20 q-2 -6 3 -8 q3 -4 6 -2 q2 1 1 5 M31 20 q2 -6 -3 -8 q-3 -4 -6 -2 q-2 1 -1 5 M9 21 q5 3 6 -4 M28 21 q-5 3 -6 -4" fill="none" stroke="currentColor" strokeWidth="1.8" />
);

type Tool = { off?: boolean; n: React.ReactNode; gap?: boolean };

const ROW_A: Tool[] = [
  { n: (
    <>
      <path d="M14 3.500h7l3 2.500v6h-10Z" fill="#f3f3f3" stroke="currentColor" strokeWidth="1.4" />
      <path d="M15.500 6h4v1h-4Z M15.500 8.200h7v1h-7Z M10 13l3 -2h12l3 2v4.500h-18Z M12 18.500h14v3l-2 1h-10l-2 -1Z" />
    </>
  ) },
  { n: (
    <>
      <circle cx="20" cy="10.500" r="7.500" />
      <circle cx="20" cy="10.500" r="4.600" fill="none" stroke="#f3f3f3" strokeWidth="0.900" strokeDasharray="2 1.200" />
      <circle cx="20" cy="10.500" r="1.400" fill="#f3f3f3" />
      <path d="M6 19h4v-2h12v2.500h9v1.500h-9v2h-12v-2h-4Z" stroke="#f3f3f3" strokeWidth="0.600" />
      <path d="M12.500 17v6M15 17v6M17.500 17v6M20 17v6" stroke="#f3f3f3" strokeWidth="0.800" />
    </>
  ) },
  { n: (
    <>
      <path d="M7 10 L14 5.500 L19 7 L23 4 L27 4.500 L31 9 L28 15 L25 13 L23 15 L22 21 L17 20.500 L15 14 L11 16 L6.500 14Z" />
      <path d="M8 11l3.500 3M16.500 16.500l5 1M13 7l5 4M21 6l5 5" stroke="#f3f3f3" strokeWidth="0.900" fill="none" />
    </>
  ) },
  { off: true, n: (
    <text x="4" y="19" fontSize="19" textLength="29" lengthAdjust="spacingAndGlyphs" fontFamily="'Liberation Sans', sans-serif" stroke="currentColor" strokeWidth="0.500">?@</text>
  ) },
  { gap: true, n: (<><Monitor /><path d="M19.500 8h1.500v1.400h-1.500Z M22.500 8h1.500v1.400h-1.500Z M25.500 8h1.500v1.400h-1.500Z M28.500 8h1.500v1.400h-1.500Z" /><TinyText t="ELSA" /></>) },
  { off: true, n: (<><Monitor /><path d="M19.500 8h1.500v1.400h-1.500Z M22.500 8h1.500v1.400h-1.500Z M25.500 8h1.500v1.400h-1.500Z" /><TinyText t="DEPOT" /></>) },
  { n: (<><g transform="translate(2 1.500) scale(.62)"><Cart /></g><g transform="translate(11 9) scale(.62)"><Cart /></g></>) },
  { gap: true, n: <path d="M21 4 L29 9 L27.500 10.500 L25.500 10.200 L22 14 L22.500 18 L20.800 19 L16.800 16 L9.500 22 L9 21.500 L14.500 14.500 L10.500 11.500 L12 10 L16.500 10 L20.500 6.800 L19.800 5Z" /> },
  { n: (<><path d="M4 13 L13 4.500 V21.500Z" /><path d="M15.500 4h10l4.500 4v14h-14.500Z" /><path d="M17.500 8h6M17.500 11h10.500M17.500 14h8M17.500 17h10.500M17.500 19.600h7" stroke="#f3f3f3" strokeWidth="1" /></>) },
  { n: (<><path d="M32.500 13 L23.500 4.500 V21.500Z" /><path d="M6.500 4h9.500l4.500 4v14h-14Z" /><path d="M8.500 8h5.500M8.500 11h10M8.500 14h7.500M8.500 17h10M8.500 19.600h6" stroke="#f3f3f3" strokeWidth="1" /></>) },
];

const ROW_B: Tool[] = [
  { n: (
    <>
      <path d="M5 4h22v2h-22Z M5 7.700h20v2h-20Z M5 11.300h20v2h-20Z M5 15h20v2h-20Z M5 18.600h20v2h-20Z M5 21h27v1.500h-27Z" />
      <path d="M26.500 4h5.500v18h-5.500Z" /><path d="M28 5.500h2.500v4h-2.500Z M28 17h2.500v3.500h-2.500Z" fill="#f3f3f3" />
    </>
  ) },
  { off: true, n: <path fillRule="evenodd" d="M8 7 a6 6 0 1 0 5.500 8 H25 v2.500 h2 V15 h1.500 v2 h4 V10.500 H13.500 A6 6 0 0 0 8 7Z M5.500 11 a2 2 0 1 1 0 4 a2 2 0 1 1 0 -4Z" /> },
  { off: true, n: (<><Car /><path d="M17.600 4h1.800v2h-1.800Z M17.600 8h1.800v8h-1.800Z" /></>) },
  { off: true, n: <path d="M4.500 6 L11 13 L4.500 20Z M19 12h13v2h-13Z" /> },
  { gap: true, off: true, n: (<><g transform="translate(-4 1)"><Monitor /></g><path d="M16 8.500h2v1.600h-2Z M20 8.500h2v1.600h-2Z" /><path d="M25 6h9v16h-9Z" /><path d="M27 9h5M27 12h5M27 15h5M27 18h5" stroke="#f3f3f3" strokeWidth="1" /></>) },
  { off: true, n: (<><path d="M10 3h8l3 3v7h-11Z" /><path d="M12 6h5M12 8.500h7M12 11h7" stroke="#f3f3f3" strokeWidth="0.900" /><g transform="translate(4 8) scale(.72)"><Car /></g></>) },
  { n: <Cart /> },
  { gap: true, n: <path d="M11 4h1.800v18h-1.800Z M14.500 4h1.800v18h-1.800Z M17.500 13 L27 4.500 V21.500Z" /> },
  { n: <path d="M12.500 4h2v18h-2Z M15.500 13 L25 4.500 V21.500Z" /> },
  { n: <path d="M12.500 13 L22 4.500 V21.500Z" /> },
];

const ToolRow = ({ items }: { items: Tool[] }) => (
  <div className="flex justify-end">
    {items.map((b, i) => (
      <div key={i} className={i === 0 ? "" : b.gap ? "ml-[18.500px]" : "ml-[6px]"}>
        <ToolButton off={b.off}>{b.n}</ToolButton>
      </div>
    ))}
  </div>
);

function ViewButton({ off, children }: { off?: boolean; children: React.ReactNode }) {
  return (
    <button className={`flex h-[22px] w-[22px] shrink-0 items-center justify-center border bg-[#f3f3f3] ${off ? "border-[#c3c6c7] text-[#c3c6c7]" : "border-[#4a5157] text-[#4a5157]"}`}>
      <svg width="20" height="20" viewBox="0 0 20 20" fill="none" stroke="currentColor" strokeWidth="1.200">{children}</svg>
    </button>
  );
}

const Lens = () => (<><circle cx="8" cy="7.500" r="6" /><path d="M12 12 L18.500 18.500" strokeWidth="2" /></>);

/* ---------- parts list ---------- */

type Part = { pos?: string; num?: string; ext?: string; name: string[]; remark?: string; qty?: string };

const black: Part = { num: "10/20", ext: "9B9", name: ["satin black"] };
const PARTS: Part[] = [
  { name: ["bumper"], remark: "front" },
  { pos: "1", num: "5LA 807 221", name: ["cover for bumper"], qty: "1" },
  { pos: "(1)", num: "5LA 807 221 C", name: ["cover for bumper", "for vehicles with headlight", "washer system"], qty: "1" },
  { pos: "2", num: "5LA 807 241", name: ["trim", "towing eye"], qty: "1" },
  { pos: "3", num: "5LA 807 367", name: ["cap"], remark: "left", qty: "1" },
  black,
  { pos: "(3)", num: "5LA 807 368", name: ["cap"], remark: "right", qty: "1" },
  black,
  { pos: "4", num: "5LA 853 677", name: ["cooling air grill"], qty: "1" },
  black,
  { pos: "5", num: "5LA 807 061", name: ["spoiler"], qty: "1" },
  black,
  { pos: "6", num: "5LA 807 611", name: ["end plate"], qty: "1" },
  black,
  { pos: "7", num: "5LA 807 763", name: ["trim"], qty: "2" },
  black,
  { pos: "8", num: "5LA 807 183", name: ["guide piece"], remark: "left", qty: "1" },
];

const HEADS = ["POS", "PART NUMBER", "NAME", "REMARK", "QTY", "MODEL"];

function PartRow({ p, first }: { p: Part; first: boolean }) {
  return (
    <div className={`grid shrink-0 grid-cols-[101px_178px_642px_113px_39px_1fr] border-b border-[#b9bdbd] pb-[21px] text-[16px] leading-[22px] font-bold tracking-[-0.06px] ${first ? "bg-[#f3f3f3] shadow-[inset_0_0_0_2px_#4a5157]" : ""}`}>
      <div className="w-[58px] text-center">{p.pos}</div>
      <div className="flex h-[22px] text-[18.67px] tracking-[0.24px] whitespace-nowrap">
        <span className={p.ext ? "w-[83.5px]" : ""}>{p.num}</span>
        {p.ext}
      </div>
      <div>{p.name.map((n) => <div key={n}>{n}</div>)}</div>
      <div>{p.remark}</div>
      <div>{p.qty}</div>
      <div />
    </div>
  );
}

const FOOT: { t: string; w: string }[] = [
  { t: "MARKET", w: "w-[320px]" },
  { t: "ORDER", w: "w-[360px]" },
  { t: "EC", w: "w-[151px]" },
  { t: "TC", w: "w-[137px]" },
  { t: "ITC", w: "w-[320px]" },
  { t: "VIN NUMBER", w: "w-[402px]" },
  { t: "PRODUCTION", w: "w-[264px]" },
  { t: "SALES TYPE", w: "w-[357px]" },
  { t: "CAT", w: "w-[60px]" },
];

export default function App() {
  return (
    <div className="relative flex h-[1215px] w-[2553px] flex-col overflow-hidden bg-white font-['Liberation_Sans',Arial,sans-serif] text-black">
      <div className="h-[4px] shrink-0 border-b border-[#8b8b8b] bg-[#f3f3f3]" />
      <div className="h-[8px] shrink-0 bg-[#164f8b]" />

      <header className="flex h-[95px] shrink-0 border-b border-[#4a5157]">
        <div className="flex w-[160px] shrink-0 flex-col items-start pt-[15px] pl-[29px]">
          <svg className="ml-[3px]" width="44" height="45" viewBox="32 27 44 45">
            <defs>
              <linearGradient id="ring" x1="0" y1="0" x2="0" y2="1">
                <stop offset="0" stopColor="#e3e6e9" /><stop offset="1" stopColor="#8e949c" />
              </linearGradient>
            </defs>
            <circle cx="54" cy="49.3" r="21.5" fill="url(#ring)" />
            <circle cx="54" cy="49" r="19.2" fill="#fff" stroke="#15181b" strokeWidth="1.5" />
            <path d="M40.500 56 L44 58.500 H63 L66 56 L67.500 59.500 L65 61.500 H43 L40 60Z" fill="#3aa445" stroke="#155a23" strokeWidth="0.5" />
            <path d="M48 58 V54 Q46 48.500 38.500 43 Q46 43.500 51 50 Q46 41 38.500 36.500 Q49 38.500 53.500 47 Q49 38 42.500 33.500 Q54 36.500 57 47 Q54 37 50 32.800 Q61 37 62.500 48 Q63 54 62.500 58Z" fill="#3aa445" stroke="#155a23" strokeWidth="0.5" />
            <circle cx="56.500" cy="53" r="2.600" fill="#fff" stroke="#111" strokeWidth="1.100" />
          </svg>
          <svg width="52" height="15" viewBox="0 0 52 15">
            <text x="0" y="14" fontSize="11.500" fontWeight="bold" textLength="51" lengthAdjust="spacingAndGlyphs" fontFamily="'Liberation Sans', sans-serif">ŠKODA</text>
          </svg>
        </div>
        <div className="flex flex-1 flex-col justify-between pt-[16px]">
          <Caption className="pl-[9px]">FI SUGGESTION</Caption>
          <nav className="-mb-px flex items-end gap-[4px] text-[14px] font-bold">
            <div className="flex h-[29px] w-[54px] items-center justify-center rounded-t-[5px] border border-b-0 border-[#4a5157] bg-white pb-px">
              <span className="scale-x-[.88]">EPC</span>
            </div>
            {TABS.map((t) => (
              <div key={t.t} className={`flex h-[25px] shrink-0 items-center justify-center rounded-t-[6px] border border-[#4a5157] bg-[linear-gradient(#f4f4f4_85%,#d9d9d9)] pt-px whitespace-nowrap ${t.w} ${t.off ? "text-[#b4b7b9]" : ""}`}>
                <span className="w-max shrink-0 scale-x-[.88]">{t.t}</span>
              </div>
            ))}
          </nav>
        </div>
        <div className="flex pt-[16px]">
          <div className="w-[119px]">
            <Caption>STOCK</Caption>
            <div className="mt-[3px] h-[16px] w-[16px] border-2 border-[#a3a9a9]" />
          </div>
          <Caption className="w-[178px]">CUSTOMER NO.</Caption>
          <Caption className="w-[179px]">ORDER FORM</Caption>
          <Caption className="w-[198px]">DEPOT ORDER FORM</Caption>
          <svg className="mt-[8px]" width="127" height="58" viewBox="2426 36 127 58">
            <defs>
              <linearGradient id="pk" gradientUnits="userSpaceOnUse" x1="2427" y1="0" x2="2500" y2="0">
                <stop offset="0" stopColor="#a31316" /><stop offset="0.25" stopColor="#8c1a1c" /><stop offset="1" stopColor="#36343a" />
              </linearGradient>
            </defs>
            <text x="2425" y="76" fontSize="50" fontWeight="bold" textLength="112" lengthAdjust="spacingAndGlyphs" fill="url(#pk)" stroke="url(#pk)" strokeWidth="1.200" fontFamily="'Liberation Sans', sans-serif">PETKA</text>
            <text x="2426" y="87" fontSize="12.500" fontWeight="900" textLength="110" lengthAdjust="spacingAndGlyphs" fill="#2f2d33" fontFamily="Lato, sans-serif">Digital Eliteboard</text>
          </svg>
        </div>
      </header>

      <section className="flex h-[75px] shrink-0 justify-between pl-[8px]">
        <div className="flex pt-[19px]">
          <Field label="FI SEARCH" value="" box="w-[187px] mr-[11px]" />
          <Field label="MODEL" value="ENEL" box="w-[68px] mr-[9px]" />
          <Field label="YEAR" value="2026 (T)" box="w-[82px] mr-[9px]" />
          <Field label="MG" value="8" box="w-[42px] mr-[9px]" />
          <Field label="SG" value="07" box="w-[44px] mr-[9px]" />
          <Field label="ILLUSTRATION" value="807-000" box="w-[80px] mr-[10px]" />
          <svg className="mt-[14px]" width="22" height="21" viewBox="0 0 22 21">
            <path d="M10.500 1 L20.500 19.500 H1 Z" fill="#eef01c" stroke="#222" strokeWidth="1.200" strokeLinejoin="round" />
            <path d="M9.300 6.500h2.600l-.5 7h-1.600Z M9.400 15h2.400v2.400h-2.400Z" fill="#111" />
          </svg>
        </div>
        <div className="mr-[16px] flex flex-col gap-[8px] pt-[8px]">
          <ToolRow items={ROW_A} />
          <ToolRow items={ROW_B} />
        </div>
      </section>

      <main className="flex h-[805px] shrink-0">
        <section className="flex w-[1346px] shrink-0 flex-col">
          <div className="flex h-[22px] gap-[2px]">
            <div className="mr-px w-[5px] border border-l-0 border-black bg-[#f3f3f3]" />
            <ViewButton><Lens /><path d="M4.500 7.500h7M8 4v7" strokeWidth="1.800" /></ViewButton>
            <ViewButton off><Lens /><path d="M5 7.500h6" strokeWidth="1.600" /></ViewButton>
            <ViewButton><rect x="1.500" y="8" width="9" height="9" strokeDasharray="2 1.200" /><circle cx="10.500" cy="8" r="5" /><path d="M14 12 L19 18" strokeWidth="2" /></ViewButton>
            <ViewButton off><path d="M11 4A5 5 0 1 0 8 12.500M10 12 L14 17" /><text x="5.500" y="11.500" fontSize="6" fontWeight="bold" fill="currentColor" stroke="none" textLength="14">100%</text></ViewButton>
            <ViewButton><Lens /></ViewButton>
            <div className="flex-1 border border-black bg-[#f3f3f3]" />
            <div className="ml-px flex gap-[4px]">
              <ViewButton off><text x="1" y="15.500" fontSize="15" fill="#8d9294" stroke="none" textLength="17" lengthAdjust="spacingAndGlyphs">3D</text></ViewButton>
              <ViewButton off><path d="M4 5v10M1.500 5.500h2M1.500 14.500h2M7 10h5" /><path d="M9 7l-3 3 3 3Z" fill="currentColor" /><path d="M14 5h4v3h-4ZM14 12h4v3h-4Z" /></ViewButton>
              <ViewButton><rect x="1.500" y="4.500" width="17" height="11" /><path d="M7.500 4.500V15.500" /></ViewButton>
            </div>
            <ViewButton><path d="M10 2v16M4 10h12" /><path d="M0 10l5-4v8ZM20 10l-5-4v8Z" fill="currentColor" stroke="none" /></ViewButton>
          </div>
          <div className="flex flex-1">
            <button className="mt-[12px] ml-px flex h-[76px] w-[60px] shrink-0 items-center justify-center rounded-r-[10px] border border-[#75797c] bg-[#f3f3f3]">
              <svg width="28" height="24" viewBox="0 0 28 24">
                <path d="M5 12 L21 5.300 M5 12 L21 18.700" stroke="#4a5157" strokeWidth="3.600" />
                <circle cx="5.200" cy="12" r="4.600" fill="#4a5157" /><circle cx="21.200" cy="5.300" r="4.800" fill="#4a5157" /><circle cx="21.200" cy="18.700" r="4.800" fill="#4a5157" />
              </svg>
            </button>
            <svg className="mt-[44px] ml-[369px] shrink-0" width="500" height="710" viewBox="430 248 500 710">
              <Drawing id="main" />
            </svg>
          </div>
        </section>

        <div className="mr-[3px] ml-[3px] h-[22px] w-px shrink-0 bg-black shadow-[1px_0_0_#000]" />

        <section className="flex w-[1183px] shrink-0 flex-col">
          <div className="mb-[2px] grid h-[22px] shrink-0 grid-cols-[100px_178px_642px_113px_39px_1fr] items-center border border-black bg-[#e9e9e9] text-[14px] font-bold whitespace-nowrap text-[#111]">
            {HEADS.map((h, i) => (
              <div key={h} className={i === 0 ? "pl-[5px]" : ""}>
                <span className="inline-block origin-left scale-x-[.895]">{h}</span>
              </div>
            ))}
          </div>
          <div className="flex h-[777px] flex-col overflow-hidden">
            {PARTS.map((p, i) => <PartRow key={i} p={p} first={i === 0} />)}
          </div>
        </section>

        <div className="ml-px flex h-[801px] flex-1 flex-col items-center bg-[#f0f0f0]">
          <div className="flex h-[17px] items-center">
            <svg width="9" height="6" viewBox="0 0 9 6"><path d="M1 5 L4.500 1.500 L8 5" fill="none" stroke="#505050" strokeWidth="1.700" /></svg>
          </div>
          <div className="h-[179px] w-full bg-[#cdcdcd]" />
          <div className="flex-1" />
          <div className="flex h-[17px] items-center">
            <svg width="9" height="6" viewBox="0 0 9 6"><path d="M1 1 L4.500 4.500 L8 1" fill="none" stroke="#505050" strokeWidth="1.700" /></svg>
          </div>
        </div>
      </main>

      <div className="h-px shrink-0 bg-black" />
      <section className="mt-[2px] ml-px flex h-[174px] shrink-0 gap-[2px] overflow-hidden">
        {CARDS.map((c) => <Thumb key={c.id} c={c} selected={c.id === "807-000"} />)}
        <div className="h-full w-[6px] border border-r-0 border-[#a5abab]" />
      </section>

      <div className="mt-[3px] flex h-[16px] shrink-0 items-center bg-[#f0f0f0]">
        <div className="flex w-[18px] justify-center">
          <svg width="6" height="10" viewBox="0 0 6 10"><path d="M5 1 L1.500 5 L5 9" fill="none" stroke="#505050" strokeWidth="1.700" /></svg>
        </div>
        <div className="h-full w-[318px] bg-[#cdcdcd]" />
        <div className="flex-1" />
        <div className="flex w-[17px] justify-center">
          <svg width="6" height="10" viewBox="0 0 6 10"><path d="M1 1 L4.500 5 L1 9" fill="none" stroke="#505050" strokeWidth="1.700" /></svg>
        </div>
      </div>

      <footer className="mt-[2px] flex h-[30px] shrink-0 bg-[#164f8b] text-[10px] leading-[12px] text-white">
        <div className="w-[158px] shrink-0 pt-[4px] pl-[5px]">
          <svg width="24" height="26" viewBox="0 0 24 26">
            <path d="M.5 26V.5H23.500V26" fill="none" stroke="#fff" />
            <g fill="#fff" fontSize="11.500" fontWeight="bold" fontFamily="'Liberation Sans', sans-serif">
              <text x="0" y="15.500" textLength="19" lengthAdjust="spacingAndGlyphs">LEX</text>
              <text x="0" y="25.200" textLength="23" lengthAdjust="spacingAndGlyphs">COM</text>
            </g>
          </svg>
        </div>
        {FOOT.map((f) => (
          <div key={f.t} className={`shrink-0 pt-[3px] whitespace-nowrap ${f.w}`}>
            <span className="inline-block origin-left scale-x-[.91]">{f.t}</span>
            {f.t === "CAT" && <div className="text-[13px] leading-[15px] font-bold tracking-[-0.3px]">50A</div>}
          </div>
        ))}
      </footer>

      <div className="pointer-events-none absolute top-[1112px] left-[2202px] z-20 font-['Open_Sans',sans-serif] whitespace-nowrap text-[#8f8f8f]/60">
        <div className="text-[19px] leading-[28px]">Activate Windows</div>
        <div className="mt-[2px] text-[14.3px] leading-[20px]">Go to Settings to activate Windows.</div>
      </div>
    </div>
  );
}
